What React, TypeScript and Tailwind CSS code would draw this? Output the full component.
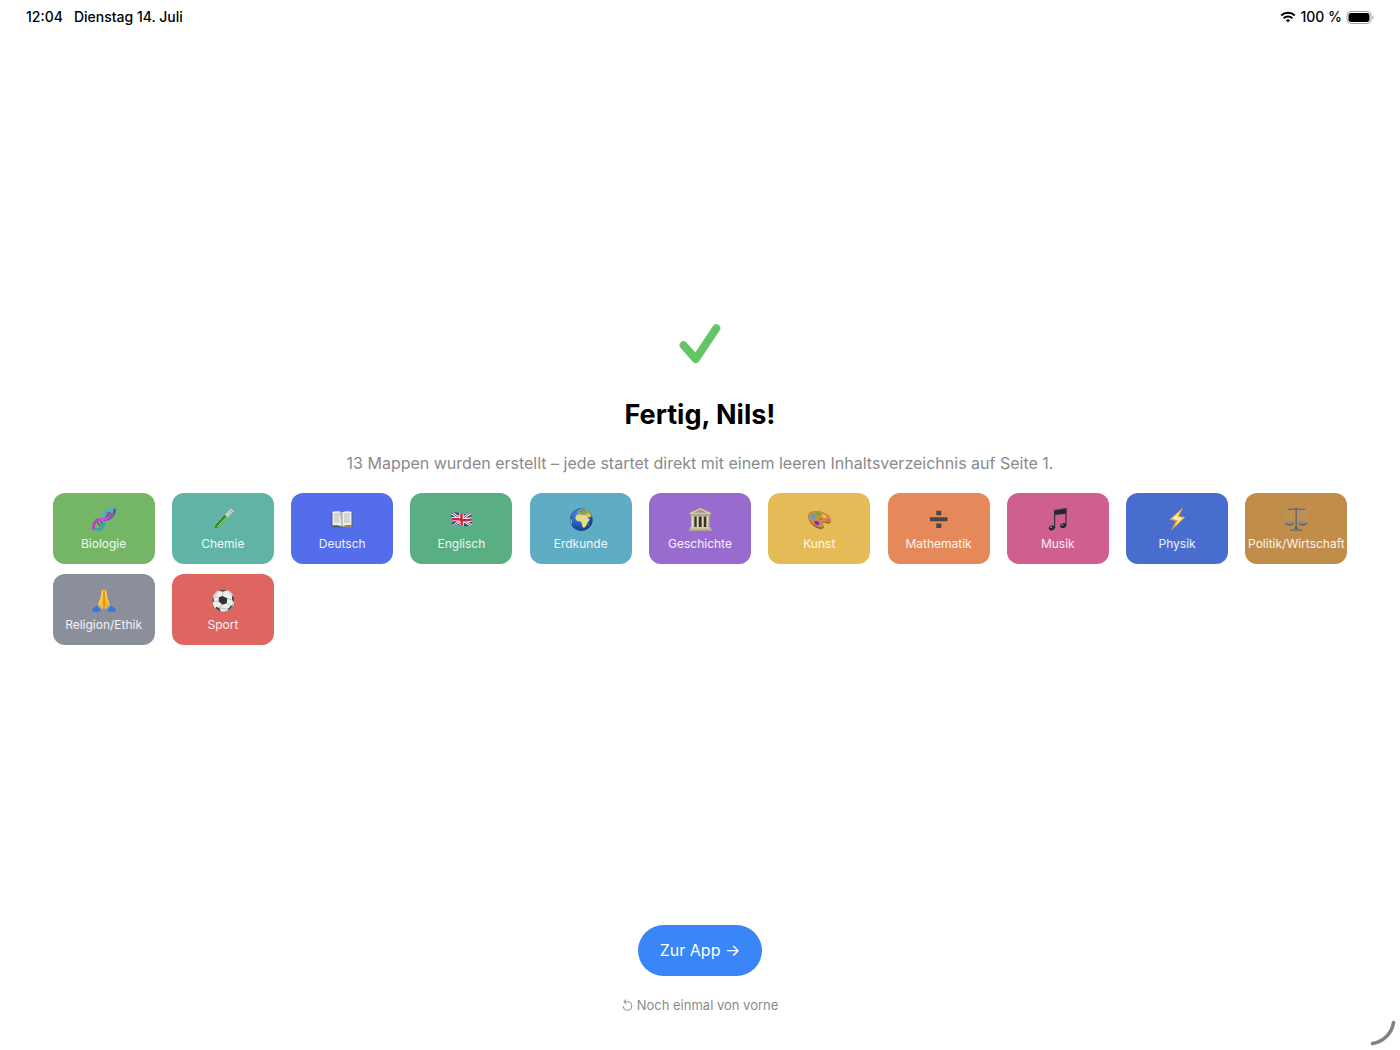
import type { ReactNode } from "react";

function Icon({ children }: { children: ReactNode }) {
  return (
    <svg viewBox="0 0 24 24" className="size-6" aria-hidden="true">
      {children}
    </svg>
  );
}

const Dna = () => (
  <Icon>
    <g fill="none" strokeLinecap="round">
      <path d="M4 13l4 6M7 12l4 6M14 5l4 5M17 4l3 5" stroke="#39549b" strokeWidth="1.2" />
      <path d="M1.5 22C1 16 4 12.500 8 12.500c5 0 8.500-2 9-9" stroke="#b03bb5" strokeWidth="2.600" />
      <path d="M2 22c6 1.500 10-1.500 10-6" stroke="#3f9fb6" strokeWidth="2.800" />
      <path d="M11.500 11C11 5 15 2.500 22.500 2.500" stroke="#48b3cf" strokeWidth="2.800" />
      <path d="M11.500 12.800c6 .5 10.500-3 11-10" stroke="#8a4fc0" strokeWidth="2.400" />
      <path d="M8 12.500c2 0 4 0 6-1.200" stroke="#d04fd0" strokeWidth="2.800" />
      <path d="M1.800 21C1.500 17 3.500 14 6 13" stroke="#c23fc0" strokeWidth="2.200" />
      <path d="M22.800 2.500c0 1.500-.3 2.700-.8 3.800" stroke="#375b8f" strokeWidth="1.600" />
    </g>
  </Icon>
);

const TestTube = () => (
  <Icon>
    <g transform="rotate(43 12 12.500)">
      <path d="M9.800 0v22.800a2.300 2.300 0 0 0 4.600 0V0z" fill="#b9d6cc" stroke="#7fa69a" strokeWidth=".7" />
      <path d="M10.200 8v14.600a1.900 1.900 0 0 0 3.800 0V8z" fill="#34942a" />
      <path d="M10.700 8v14" stroke="#1f6c1c" strokeWidth=".8" />
      <path d="M12.900 2v20" stroke="#a5dd92" strokeWidth=".9" />
      <ellipse cx="12.100" cy="-.3" rx="3.300" ry="1.300" fill="#cbd8d6" stroke="#7d8d8a" strokeWidth=".7" />
    </g>
  </Icon>
);

const Book = () => (
  <Icon>
    <path d="M1.500 6h21v14.300h-9L12 21l-1.500-.7h-9z" fill="#44606e" />
    <path d="M13 19.800h9.300" stroke="#c69a56" strokeWidth="1" />
    <path d="M2.500 4.800C5.500 3.800 9.500 4 12 5.600c2.500-1.600 6.500-1.800 9.500-.8v13.700c-3-.5-6.500-.4-9.500 1-3-1.400-6.500-1.500-9.500-1z" fill="#f0efeb" />
    <path d="M12 5.600c-1.500-1-3-1.300-4.500-1.300 2 1 3.500 3 3.800 14.700l.7.500z" fill="#c5c4c2" />
    <path d="M12 5.600v13.900" stroke="#777" strokeWidth=".6" />
    <path d="M4 7h5.500M4 9h5.500M4 11h5.500M4 13h5.500M4 15h5.500M14 7h6M14 9h6M14 11h6M14 13h6M14 15h6" stroke="#a5a5a5" strokeWidth=".7" />
  </Icon>
);

const Flag = () => (
  <Icon>
    <clipPath id="flag">
      <path d="M2 6.500c3.500-1.500 6.500-1 10 0s7 .5 10-1l1 12.500c-3.500 1.500-7 1.500-10.500.5s-6-1-9 1z" />
    </clipPath>
    <g clipPath="url(#flag)">
      <path d="M0 3h24v19H0z" fill="#27458d" />
      <path d="M2 5.500l21 13.500M22.500 5L3 20" stroke="#eceef5" strokeWidth="2.800" />
      <path d="M2 5.500l21 13.500M22.500 5L3 20" stroke="#c8283b" strokeWidth="1" />
      <path d="M12.300 4l.5 17M1 12.800c4-1.500 7-1 11 0s8 .5 12-1" fill="none" stroke="#f3f3f6" strokeWidth="4.400" />
      <path d="M12.300 4l.5 17M1 12.800c4-1.500 7-1 11 0s8 .5 12-1" fill="none" stroke="#cd2237" strokeWidth="2.400" />
    </g>
  </Icon>
);

const Globe = () => (
  <Icon>
    <defs>
      <radialGradient id="sea" cx=".4" cy=".3" r=".75">
        <stop offset="0" stopColor="#4f96e8" />
        <stop offset=".6" stopColor="#2457b8" />
        <stop offset="1" stopColor="#173680" />
      </radialGradient>
    </defs>
    <circle cx="12.300" cy="12.500" r="11.400" fill="url(#sea)" />
    <path d="M6.500 10.300c.3-2 2-3.200 4.500-3 2.300.2 5 .5 7 1.300l1.500 3.200 1.200.4c-.5 2-2.300 3.200-2.800 4.800-.6 2-1.700 3.700-3.200 3.800-1.400 0-1.700-2.500-2-4.500-.3-1.700-1.700-2-3.700-2.200-1.700-.2-2.700-1.800-2.500-3.800z" fill="#dfe08d" />
    <path d="M7 10c.5-1.600 2.200-2.300 4-2.300 2.500 0 5 .3 6.700 1.300l.8 2c-3-.8-8-1.200-11.500-1z" fill="#efd681" />
    <path d="M8 6.300l.7-2.200 2.300-1.800 4.500-.7c3 .8 5.500 2.700 6.800 5.300l.7 3-2.200-1-1.800.8-2.200-2-2.500.2-1.700-1.400-1.300 1.200z" fill="#94a34d" />
    <path d="M17 6.500l3-.6 2.200 3-1.500 1.600-2.200-.6z" fill="#dcc06c" />
    <path d="M1.600 11.500c1.200.7 2 2.200 1.800 3.800l-.9 2.500c-1-2-1.300-4-.9-6.300z" fill="#a3b04c" />
    <path d="M11 4.500l2.200.5M14 3l2 .8" stroke="#2960bb" strokeWidth=".8" />
    <path d="M19.500 16.500l.8 1-1 1.500z" fill="#bebc62" />
  </Icon>
);

const Museum = () => (
  <Icon>
    <path d="M4 9h16.500v12H4z" fill="#38342a" />
    <path d="M1.500 5.800L12.300.8l10.800 5v1.800H1.500z" fill="#d5ccb0" stroke="#8d8467" strokeWidth=".5" />
    <path d="M5.500 5.700l6.800-3.200 6.800 3.200z" fill="#a39a7d" />
    <path d="M2.500 7.600h19.600v2H2.500z" fill="#b8ae8e" />
    <path d="M3.400 9.300h2.800v11H3.400zM8.700 9.300h2v11h-2zM13.700 9.300h2v11h-2zM18.400 9.300h2.800v11h-2.800z" fill="#e4dcc2" />
    <path d="M5.900 9.500v11M20.700 9.500v11" stroke="#aaa180" strokeWidth=".7" />
    <path d="M2.300 20h20v2h-20z" fill="#d4c9a6" />
    <path d="M.8 21.800h23v2H.8z" fill="#b9ae8d" />
  </Icon>
);

const Palette = () => (
  <Icon>
    <path d="M1.300 9.500C1.300 5.700 5 4 9.300 4.100c6 .1 13 3.500 14.400 8.500.6 2.500-.7 4.200-2.700 4.100-1.600-.1-3.200-1.800-4.700-1-1.500.9.500 2.700.4 4.300-.1 1.800-2 2.200-4.500 1.700C6.500 20.600 1.300 15 1.300 9.500z" fill="#8d5c28" />
    <path d="M1.400 8.800C1.700 5.500 5 3.900 9.300 4c6 .1 13 3.500 14.200 7.800.5 2.300-.7 3.900-2.500 3.800-1.600-.1-3.300-1.600-5-.7-1.500.9.300 2.700.1 4.100-.2 1.500-2 1.800-4.100 1.300C6.500 19 1.200 14 1.400 8.800z" fill="#c98d48" />
    <ellipse cx="5.800" cy="9.500" rx="2.700" ry="1.900" transform="rotate(38 5.800 9.500)" fill="#39a9e4" />
    <ellipse cx="10.800" cy="6.900" rx="2.300" ry="1.600" transform="rotate(20 10.800 6.900)" fill="#50b936" />
    <ellipse cx="17.300" cy="9.300" rx="2.300" ry="1.400" transform="rotate(35 17.300 9.300)" fill="#f2cf38" />
    <ellipse cx="21" cy="13.700" rx="2.100" ry="1.300" transform="rotate(30 21 13.700)" fill="#e36255" />
    <ellipse cx="9.800" cy="16" rx="2.800" ry="1.900" transform="rotate(25 9.800 16)" fill="#7930b6" />
    <ellipse cx="13.500" cy="12.300" rx="1.300" ry=".8" fill="#a9662f" />
  </Icon>
);

const Divide = () => (
  <Icon>
    <path d="M3 10.300h17.500v4H3zM9.300 3.800h5V8.200h-5zM9.300 16.500h5v4.400h-5z" fill="#474747" />
  </Icon>
);

const Music = () => (
  <Icon>
    <path d="M8 3l12.500-2v5.700L8 8z" fill="#252628" />
    <path d="M8.600 3.500v17.500M19.900 2v16.500" stroke="#34363a" strokeWidth="1.300" />
    <ellipse cx="5.800" cy="20.900" rx="3.100" ry="2.400" transform="rotate(-15 5.800 20.900)" fill="#222427" />
    <ellipse cx="17.200" cy="18.600" rx="3.100" ry="2.400" transform="rotate(-15 17.200 18.600)" fill="#222427" />
    <ellipse cx="5" cy="20.300" rx="1.300" ry=".8" fill="#87939b" />
    <ellipse cx="16.400" cy="18" rx="1.300" ry=".8" fill="#87939b" />
    <path d="M8.500 3.400L20 1.600" stroke="#5b5d61" strokeWidth=".6" />
  </Icon>
);

const Bolt = () => (
  <Icon>
    <path d="M17.500 1L4.300 12.600l6.600 1.500L5.800 24 20.300 10.300l-6.600-1.400z" fill="#eda32c" />
    <path d="M15.500 4L7 11.800l6.200 1.400-4 6.500 8.500-8.700-5.700-1.200z" fill="#fff3ae" />
    <path d="M17.200 1.500l-4.700 8 6.500 1.300" fill="none" stroke="#ffcd50" strokeWidth=".8" />
  </Icon>
);

const Scales = () => (
  <Icon>
    <g fill="none" stroke="#626a70">
      <path d="M3.500 2.500c3 .2 5-.7 8.700-.7s5.700.9 8.700.7" strokeWidth="1.300" />
      <path d="M12.200 1v20" strokeWidth="1.500" />
      <path d="M4.500 3L1.800 15.500M5 3l4 12.500M19.500 3l-4 12.500M20 3l2.700 12.500" stroke="#a39c92" strokeWidth=".8" />
    </g>
    <path d="M1 15.500h9.200c-.5 2.300-2.300 3.200-4.600 3.200S1.500 17.800 1 15.500zM14.200 15.500h9.200c-.5 2.300-2.300 3.200-4.600 3.200s-4.100-.9-4.600-3.200z" fill="#5c6871" />
    <path d="M2.500 16.200h6M15.700 16.200h6" stroke="#afb8bd" strokeWidth=".7" />
    <path d="M11 20h2.500l.5 1.700c2 .2 4 .8 4.200 2H6.200c.2-1.200 2.300-1.800 4.300-2z" fill="#4f5f6d" />
    <path d="M8 22.800h8" stroke="#9ba7af" strokeWidth=".6" />
  </Icon>
);

const Hands = () => (
  <Icon>
    <path d="M.3 21.300L5.200 17l4 4.700-2.600 2.200H.3zM23.700 21.300L18.800 17l-4 4.700 2.600 2.200h6.300z" fill="#3a78d8" />
    <path d="M5 17.200l1.600-.8 3.600 4.300-.9 1.600zM19 17.200l-1.600-.8-3.600 4.300.9 1.600z" fill="#6ba5f0" />
    <path d="M11.900 1.800c-1.200-.8-2.100-.1-2.300 1.300L8.300 10l-2.400 6.300 4.500 5.400 1.500-3z" fill="#f8bd35" />
    <path d="M12.100 1.800c1.200-.8 2.100-.1 2.300 1.300l1.300 6.900 2.400 6.300-4.500 5.400-1.500-3z" fill="#f5b229" />
    <path d="M10.800 2.800L9.700 10.500l-2 5.200M13.200 2.800l1.100 7.700 2 5.200" fill="none" stroke="#ffdc62" strokeWidth="1" />
    <path d="M12 2.500v16.300" stroke="#b87517" strokeWidth=".8" />
  </Icon>
);

const Ball = () => (
  <Icon>
    <clipPath id="ball">
      <circle cx="12.300" cy="12.500" r="11" />
    </clipPath>
    <g clipPath="url(#ball)">
      <path d="M0 0h24v24H0z" fill="#eeeeed" />
      <path d="M20 4c5 8 1 17-8 19.500l12 1V2z" fill="#c9c9c9" />
      <path d="M11.500 8l4.700 2.200-.4 5-4.600 1.600-3.600-3.600.4-4z" fill="#303234" />
      <path d="M7 0l7 0 1.500 2.500-3.500 1.300-4-1zM0 8.500l2.500.7.5 4L1 15.500zM5 18.700l3.500 1.300 1.500 4H5zM17 20.900l2.800-3.100 2.200-.3-2 4.500-3 2zM21 7.500l1.500.7 2 4-1.500 2-2-2.200z" fill="#48494b" />
      <path d="M12 4L11.500 8M8 9.200L2.500 9.200M7.600 13.200l-4.600.3M11.200 16.800L8.500 20M15.800 15.200l4 2.600M16.200 10.200l4.800 1.800M15.500 2.500l5.500 5M2.500 9.200L8 2.800M8.500 20l8.500.9" fill="none" stroke="#a0a1a2" strokeWidth=".6" />
    </g>
  </Icon>
);

const subjects = [
  { name: "Biologie", color: "bg-[#74b566]", icon: <Dna /> },
  { name: "Chemie", color: "bg-[#60b4a5]", icon: <TestTube /> },
  { name: "Deutsch", color: "bg-[#546dea]", icon: <Book /> },
  { name: "Englisch", color: "bg-[#5aae84]", icon: <Flag /> },
  { name: "Erdkunde", color: "bg-[#5facc5]", icon: <Globe /> },
  { name: "Geschichte", color: "bg-[#986ccf]", icon: <Museum /> },
  { name: "Kunst", color: "bg-[#e5bb58]", icon: <Palette /> },
  { name: "Mathematik", color: "bg-[#e5885a]", icon: <Divide /> },
  { name: "Musik", color: "bg-[#cf5f8e]", icon: <Music /> },
  { name: "Physik", color: "bg-[#496dcf]", icon: <Bolt /> },
  { name: "Politik/Wirtschaft", color: "bg-[#c08d4b]", icon: <Scales /> },
  { name: "Religion/Ethik", color: "bg-[#8a8f9b]", icon: <Hands /> },
  { name: "Sport", color: "bg-[#de6560]", icon: <Ball /> },
];

function StatusBar() {
  return (
    <header className="flex h-[34px] items-center justify-between pr-[26px] pl-[26px] text-sm font-medium text-black">
      <div className="flex gap-[11px]">
        <span>12:04</span>
        <span>Dienstag 14. Juli</span>
      </div>
      <div className="flex items-center gap-1">
        <svg viewBox="0 0 16 12" className="h-3 w-4" fill="none" stroke="#000" strokeWidth="2.100" aria-label="WLAN">
          <path d="M1.200 4.600a9.700 9.700 0 0 1 13.600 0M3.700 7.200a6.100 6.100 0 0 1 8.600 0" />
          <path d="M8 11.400L5.900 9.200a3 3 0 0 1 4.200 0z" fill="#000" stroke="none" />
        </svg>
        <span>100 %</span>
        <svg viewBox="0 0 28 13" className="h-[13px] w-7" aria-label="Batterie">
          <rect x="1" y=".5" width="24" height="12" rx="4" fill="none" stroke="#a3a3a3" />
          <rect x="2.500" y="2" width="21" height="9" rx="2.700" fill="#000" />
          <path d="M26.300 4.500c1.600.6 1.600 3.400 0 4z" fill="#a3a3a3" />
        </svg>
      </div>
    </header>
  );
}

export default function App() {
  return (
    <div className="flex min-h-screen flex-col bg-white font-['Inter',sans-serif]">
      <StatusBar />
      <main className="flex flex-1 flex-col items-center justify-center px-11 pt-[10px]">
        <svg viewBox="0 0 42 40" className="h-10 w-[42px]" fill="none" aria-hidden="true">
          <path d="M4.600 21.300L16.800 35 37.300 4.300" stroke="#64c466" strokeWidth="8" strokeLinecap="round" strokeLinejoin="round" />
        </svg>
        <h1 className="mt-[33px] text-[27px] leading-9 font-bold text-black">Fertig, Nils!</h1>
        <p className="mt-[18px] text-center text-base leading-6 text-[#8a8a8e]">
          13 Mappen wurden erstellt – jede startet direkt mit einem leeren Inhaltsverzeichnis auf Seite 1.
        </p>
        <ul className="mt-[18px] grid w-full grid-cols-[repeat(auto-fill,minmax(112px,1fr))] justify-items-center gap-y-[10px]">
          {subjects.map((s) => (
            <li key={s.name} className={`flex w-[102px] flex-col items-center gap-[5px] rounded-xl pt-[14px] pb-3 ${s.color}`}>
              {s.icon}
              <span className="text-xs leading-4 whitespace-nowrap text-white/90">{s.name}</span>
            </li>
          ))}
        </ul>
      </main>
      <footer className="flex flex-col items-center gap-[19px] pb-[35px]">
        <button type="button" className="rounded-full bg-[#3b86f7] px-[22px] py-3 text-base leading-[27px] text-white">
          Zur App →
        </button>
        <button type="button" className="flex items-center gap-1 text-[13px] leading-5 text-[#8a8a8e]">
          <svg viewBox="0 0 11 12" className="h-3 w-[11px]" fill="none" stroke="currentColor" aria-hidden="true">
            <path d="M2 2.800h3.800a4.200 4.200 0 1 1-4.500 4.200M4.300.4L1.800 2.800l2.500 2.300" />
          </svg>
          Noch einmal von vorne
        </button>
      </footer>
      <svg viewBox="0 0 26 26" className="fixed right-1 bottom-1 size-[26px]" fill="none" aria-hidden="true">
        <path d="M2.500 23.500C13 22 22 13.500 23.500 2.500" stroke="#808080" strokeWidth="3.500" strokeLinecap="round" />
      </svg>
    </div>
  );
}
